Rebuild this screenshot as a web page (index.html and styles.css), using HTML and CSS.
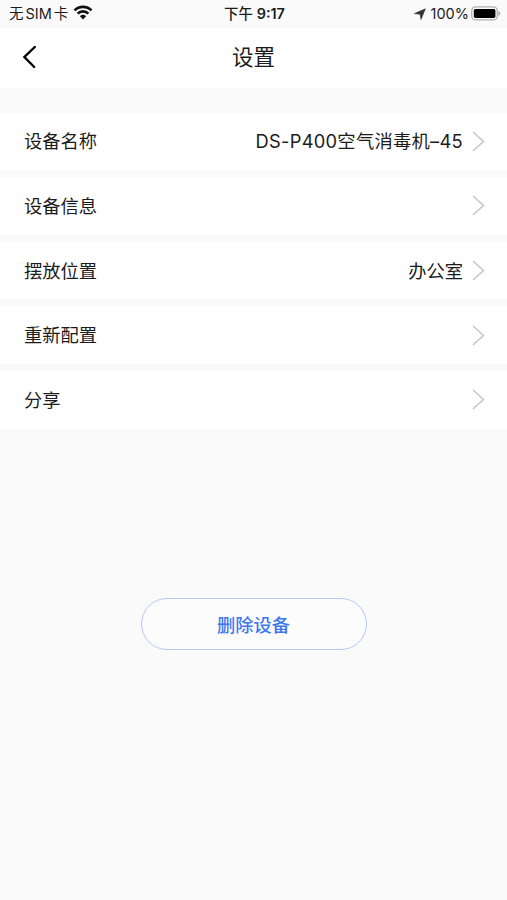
FILE: index.html
```
<!DOCTYPE html>
<html lang="zh-CN">
<head>
  <meta charset="UTF-8" />
  <meta name="viewport" content="width=device-width, initial-scale=1.0">
  <title>设置</title>
  <link rel="stylesheet" href="styles.css">
</head>
<body>
  <div class="status-bar">
    <div class="status-left">
      <span class="carrier">无<span class="sim">SIM</span>卡</span>
      <svg class="wifi" width="20" height="15" viewBox="0 0 20 15">
        <path d="M1.5 5.4a12 12 0 0 1 17 0M4.6 8.6a7.6 7.6 0 0 1 10.8 0" fill="none" stroke="#111" stroke-width="2.6"/>
        <path d="M10 14.4 6.9 11.3a4.5 4.5 0 0 1 6.2 0z" fill="#111"/>
      </svg>
    </div>
    <div class="status-time">下午 <span>9:17</span></div>
    <div class="status-right">
      <svg width="12" height="12" viewBox="0 0 12 12"><path d="M11.4.8 7 11.4 6 6.2.4 5.6z" fill="#333" stroke="#333" stroke-width=".6" stroke-linejoin="round"/></svg>
      <span class="percent">100%</span>
      <svg class="battery" width="30" height="15" viewBox="0 0 30 15">
        <rect x=".7" y=".9" width="25.6" height="13" rx="4" fill="#fafafa" stroke="#b0b0b0" stroke-width="1.3"/>
        <rect x="2.8" y="2.9" width="21.6" height="9" rx="1.6" fill="#000"/>
        <path d="M27.4 5q2 .7 2 2.4t-2 2.4z" fill="#b0b0b0"/>
      </svg>
    </div>
  </div>

  <header class="nav">
    <svg class="back" width="16" height="24" viewBox="0 0 16 24"><path d="M13.8 2 3.4 12l9.8 10" fill="none" stroke="#000" stroke-width="2.4" stroke-linecap="round"/></svg>
    <h1>设置</h1>
  </header>

  <ul class="settings">
    <li>
      <span class="label">设备名称</span>
      <span class="value model">DS-P400空气消毒机–45</span>
      <svg class="arrow" width="13" height="21" viewBox="0 0 13 21"><path d="m1 1 10.5 9.5L1 20"/></svg>
    </li>
    <li>
      <span class="label">设备信息</span>
      <svg class="arrow" width="13" height="21" viewBox="0 0 13 21"><path d="m1 1 10.5 9.5L1 20"/></svg>
    </li>
    <li>
      <span class="label">摆放位置</span>
      <span class="value">办公室</span>
      <svg class="arrow" width="13" height="21" viewBox="0 0 13 21"><path d="m1 1 10.5 9.5L1 20"/></svg>
    </li>
    <li>
      <span class="label">重新配置</span>
      <svg class="arrow" width="13" height="21" viewBox="0 0 13 21"><path d="m1 1 10.5 9.5L1 20"/></svg>
    </li>
    <li>
      <span class="label">分享</span>
      <svg class="arrow" width="13" height="21" viewBox="0 0 13 21"><path d="m1 1 10.5 9.5L1 20"/></svg>
    </li>
  </ul>

  <button class="delete-button">删除设备</button>
</body>
</html>
```

FILE: styles.css
```
html, body {
  margin: 0;
  padding: 0;
  background-color: #fafafa;
  color: #1c1c1c;
  font-family: Inter, "Noto Sans CJK SC", sans-serif;
}
svg {
  display: block;
  flex-shrink: 0;
}
.status-bar {
  display: grid;
  grid-template-columns: 1fr auto 1fr;
  align-items: center;
  height: 28px;
  padding: 0 6px 0 9px;
  box-sizing: border-box;
  font-size: 14.5px;
  line-height: 28px;
  white-space: nowrap;
}
.status-left, .status-right {
  display: flex;
  align-items: center;
}
.sim {
  margin: 0 2px;
}
.wifi {
  margin-left: 5px;
  margin-top: -3px;
}
.status-time {
  padding-right: 1px;
  font-size: 14.4px;
  font-weight: 500;
}
.status-time span {
  font-weight: 600;
}
.status-right {
  justify-content: flex-end;
}
.percent {
  margin: 0 2px 0 5px;
}
.battery {
  margin-top: -1px;
}
.nav {
  display: grid;
  grid-template-columns: 1fr auto 1fr;
  align-items: center;
  height: 60px;
  padding: 0 21px;
  background-color: #fff;
}
.back {
  margin-top: -3px;
}
.nav h1 {
  margin: 0;
  font-size: 21.5px;
  font-weight: 400;
  line-height: 58px;
  height: 60px;
}
.settings {
  display: flex;
  flex-direction: column;
  gap: 7px;
  list-style: none;
  margin: 24.6px 0 0;
  padding: 0;
}
.settings li {
  display: flex;
  align-items: center;
  height: 57.6px;
  padding: 0 22px 0 24px;
  background-color: #fff;
  font-size: 18.3px;
  line-height: 58px;
}
.label {
  flex: 1;
}
.model {
  letter-spacing: 0.27px;
}
.arrow {
  margin-left: 9px;
  fill: none;
  stroke: #c4c4c4;
  stroke-width: 1.5;
}
.delete-button {
  display: block;
  width: 226px;
  height: 52px;
  margin: 169.4px auto 0;
  padding: 0;
  border: 1.5px solid #b5c9f5;
  border-radius: 26px;
  background-color: #fcfcfc;
  color: #3f78ee;
  font-family: inherit;
  font-size: 18.3px;
  font-weight: 500;
  cursor: pointer;
}
```
